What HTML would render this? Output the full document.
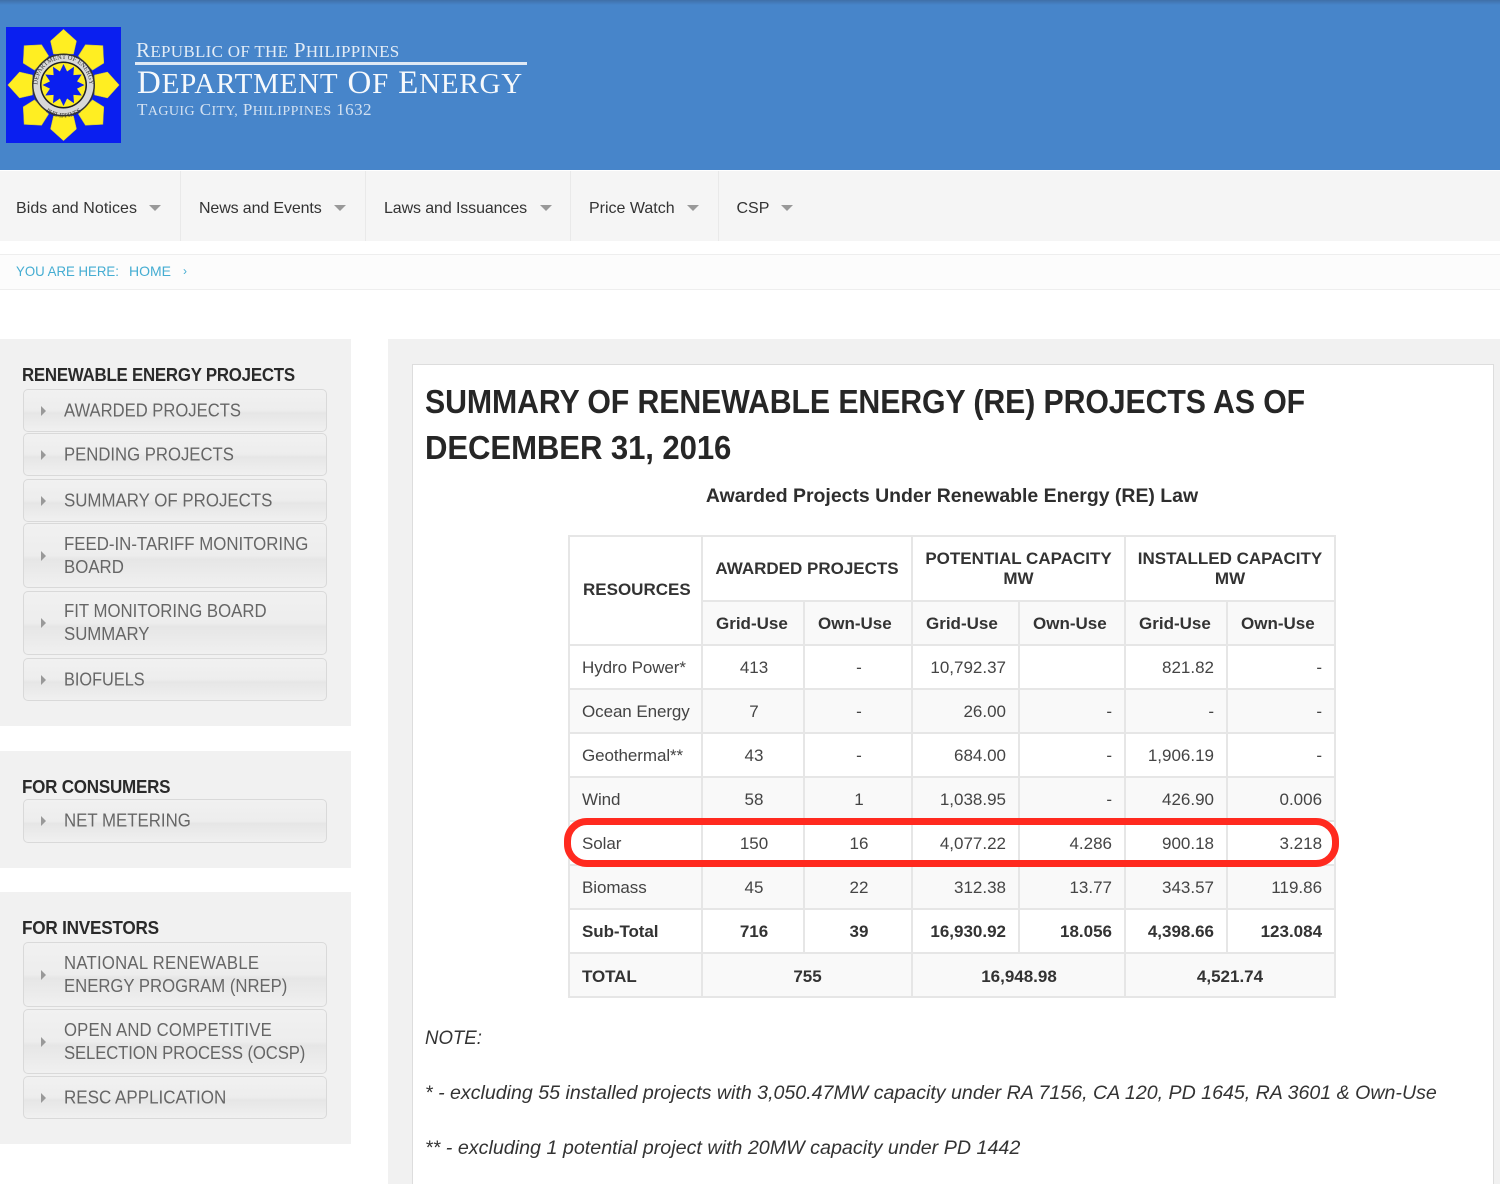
<!DOCTYPE html>
<html><head><meta charset="utf-8"><title>Department of Energy</title>
<style>
html,body{margin:0;padding:0;background:#fff;overflow:hidden}
#w{width:1500px;height:1184px;position:relative;overflow:hidden;font-family:"Liberation Sans",Arial,sans-serif}
.a{position:absolute;white-space:nowrap}
.hdr{left:0;top:0;width:1500px;height:170px;background:#4785ca}
.hdr i{position:absolute;left:0;top:0;width:1500px;height:5px;background:linear-gradient(#3f6fa8,#4785ca)}
.nav{left:0;top:171px;width:1500px;height:70px;background:#f5f5f5}
.sep{top:171px;width:1px;height:70px;background:#e9e9e9}
.nt{top:200px;font-size:16px;line-height:18px;color:#333}
.car{top:205px;width:0;height:0;border-left:6px solid transparent;border-right:6px solid transparent;border-top:6px solid #999}
.bc{left:-1px;top:254px;width:1503px;height:34px;background:#fcfcfc;border:1px solid #eee}
.bt{top:263px;font-size:14px;line-height:17px;color:#45add2}
.p{background:#f1f1f1}
.h{left:22px;font-size:18px;line-height:20px;font-weight:bold;color:#2a2a2a;letter-spacing:-.25px;transform-origin:0 0}
.m{left:23px;width:302px;box-sizing:content-box;border:1.5px solid #d9d9d9;border-radius:5px;background:linear-gradient(#f1f1f1 0,#ededed 50%,#e6e6e6 56%,#f0f0f0 100%)}
.m span{position:absolute;left:39.5px;top:50%;transform:translateY(-50%) scaleX(var(--x,.928));transform-origin:0 50%;font-size:18px;line-height:23px;color:#666;white-space:nowrap}
.m b{position:absolute;left:17px;top:50%;margin-top:-5px;width:0;height:0;border-top:5px solid transparent;border-bottom:5px solid transparent;border-left:5px solid #999}
.title{left:425px;font-size:33px;line-height:46px;font-weight:bold;color:#262626;letter-spacing:-.1px;transform-origin:0 0}
.sv{font-family:"Liberation Serif",serif}
.sv span{font-size:var(--s)}
table{position:absolute;left:568px;top:535px;border-collapse:collapse;table-layout:fixed;width:766px;font-size:17px;color:#444;background:#fff}
td,th{border:2px solid #e6e6e6;padding:2px 12px 0 14px;height:40px;box-sizing:border-box;text-align:center;line-height:20px;font-weight:normal;white-space:nowrap}
th{color:#333;font-weight:bold}
th.t{padding:0}
th.u{text-align:left;padding:2px 0 0 13px}
td.l{text-align:left;padding-left:12px;letter-spacing:-.08px}td.r{text-align:right}
tr.s td,tr.s th{background:#f9f9f9}
tr.b td{font-weight:bold;color:#333}
.note{left:425px;font-size:19.6px;line-height:24px;font-style:italic;color:#333;transform-origin:0 0}
.oval{left:564px;top:818px;width:775px;height:49px;box-sizing:border-box;border:7px solid #ff2a1f;border-radius:23px}
</style></head><body><div id="w">
<div class="a hdr"><i></i></div>
<svg class="a" style="left:0;top:0" width="135" height="160" viewBox="0 0 135 160">
<rect x="6" y="27" width="115" height="116" fill="#0a1ff0"/>
<g fill="#ffee22" stroke="#c8c040" stroke-width=".5">
<polygon points="63.5,29.3 76.5,41 73.5,54 53.5,54 50.5,41"/>
<polygon points="63.5,29.3 76.5,41 73.5,54 53.5,54 50.5,41" transform="rotate(45 63.5 85)"/>
<polygon points="63.5,29.3 76.5,41 73.5,54 53.5,54 50.5,41" transform="rotate(90 63.5 85)"/>
<polygon points="63.5,29.3 76.5,41 73.5,54 53.5,54 50.5,41" transform="rotate(135 63.5 85)"/>
<polygon points="63.5,29.3 76.5,41 73.5,54 53.5,54 50.5,41" transform="rotate(180 63.5 85)"/>
<polygon points="63.5,29.3 76.5,41 73.5,54 53.5,54 50.5,41" transform="rotate(225 63.5 85)"/>
<polygon points="63.5,29.3 76.5,41 73.5,54 53.5,54 50.5,41" transform="rotate(270 63.5 85)"/>
<polygon points="63.5,29.3 76.5,41 73.5,54 53.5,54 50.5,41" transform="rotate(315 63.5 85)"/>
</g>
<circle cx="63.5" cy="85" r="31.5" fill="#333"/>
<circle cx="63.5" cy="85" r="30" fill="#d8d8d8"/>
<circle cx="63.5" cy="85" r="23.5" fill="#222"/>
<circle cx="63.5" cy="85" r="22" fill="#ffee22"/>
<polygon fill="#0a1ff0" points="63.5,64 67.1,71.5 74,66.8 73.4,75.1 81.7,74.5 77,81.4 84.5,85 77,88.6 81.7,95.5 73.4,94.9 74,103.2 67.1,98.5 63.5,106 59.9,98.5 53,103.2 53.6,94.9 45.3,95.5 50,88.6 42.5,85 50,81.4 45.3,74.5 53.6,75.1 53,66.8 59.9,71.5"/>
<path id="rg" d="M37.5,85 A26,26 0 1 1 89.5,85" fill="none"/>
<path id="rg2" d="M34,88 A29.5,29.5 0 0 0 93,88" fill="none"/>
<text font-family="Liberation Serif,serif" font-size="6.5" fill="#333"><textPath href="#rg" startOffset="50%" text-anchor="middle">DEPARTMENT OF ENERGY</textPath></text>
<text font-family="Liberation Serif,serif" font-size="6.5" fill="#333"><textPath href="#rg2" startOffset="50%" text-anchor="middle">PHILIPPINES</textPath></text>
</svg>
<div class="a sv" style="left:136px;top:39px;font-size:21px;line-height:22px;color:#e3ecf6;letter-spacing:.3px;--s:17px">R<span>EPUBLIC OF THE</span> P<span>HILIPPINES</span></div>
<div class="a" style="left:135px;top:62px;width:392px;height:3px;background:#dfe9f5"></div>
<div class="a sv" style="left:137px;top:65px;font-size:33px;line-height:37px;color:#f6f9fc;letter-spacing:.8px;--s:29px">D<span>EPARTMENT</span> O<span>F</span> E<span>NERGY</span></div>
<div class="a sv" style="left:137px;top:100px;font-size:17px;line-height:20px;color:#d3e1f1;letter-spacing:.42px;--s:14px">T<span>AGUIG</span> C<span>ITY,</span> P<span>HILIPPINES</span> 1632</div>

<div class="a nav"></div>
<div class="a sep" style="left:180px"></div><div class="a sep" style="left:365px"></div><div class="a sep" style="left:570px"></div><div class="a sep" style="left:718px"></div>
<div class="a nt" style="left:16px;letter-spacing:.06px">Bids and Notices</div><div class="a car" style="left:149px"></div>
<div class="a nt" style="left:199px;letter-spacing:-.13px">News and Events</div><div class="a car" style="left:334px"></div>
<div class="a nt" style="left:384px;letter-spacing:-.11px">Laws and Issuances</div><div class="a car" style="left:540px"></div>
<div class="a nt" style="left:589px">Price Watch</div><div class="a car" style="left:687px"></div>
<div class="a nt" style="left:736.5px">CSP</div><div class="a car" style="left:781px"></div>

<div class="a bc"></div>
<div class="a bt" style="left:16px;transform:scaleX(.945);transform-origin:0 0">YOU ARE HERE:</div>
<div class="a bt" style="left:129px">HOME</div>
<div class="a bt" style="left:183px;font-size:12px">›</div>

<div class="a p" style="left:0;top:339px;width:351px;height:387px"></div>
<div class="a p" style="left:0;top:751px;width:351px;height:117px"></div>
<div class="a p" style="left:0;top:892px;width:351px;height:252px"></div>

<div class="a h" style="top:365px;transform:scaleX(.936)">RENEWABLE ENERGY PROJECTS</div>
<div class="a m" style="top:389px;height:41px"><b></b><span style="--x:.923">AWARDED PROJECTS</span></div>
<div class="a m" style="top:433px;height:41px"><b></b><span>PENDING PROJECTS</span></div>
<div class="a m" style="top:479px;height:41px"><b></b><span style="--x:.937">SUMMARY OF PROJECTS</span></div>
<div class="a m" style="top:523px;height:63px"><b></b><span style="--x:.935">FEED-IN-TARIFF MONITORING<br>BOARD</span></div>
<div class="a m" style="top:591px;height:62px"><b></b><span style="--x:.932">FIT MONITORING BOARD<br>SUMMARY</span></div>
<div class="a m" style="top:658px;height:41px"><b></b><span style="--x:.906">BIOFUELS</span></div>

<div class="a h" style="top:777px;transform:scaleX(.946)">FOR CONSUMERS</div>
<div class="a m" style="top:799px;height:42px"><b></b><span style="--x:.935">NET METERING</span></div>

<div class="a h" style="top:918px;transform:scaleX(.954)">FOR INVESTORS</div>
<div class="a m" style="top:942px;height:63px"><b></b><span><span style="position:static;transform:none;letter-spacing:.28px">NATIONAL RENEWABLE</span><br>ENERGY PROGRAM (NREP)</span></div>
<div class="a m" style="top:1009px;height:63px"><b></b><span><span style="position:static;transform:none;letter-spacing:.2px">OPEN AND COMPETITIVE</span><br><span style="position:static;transform:none;letter-spacing:-.13px">SELECTION PROCESS (OCSP)</span></span></div>
<div class="a m" style="top:1076px;height:41px"><b></b><span style="--x:.945">RESC APPLICATION</span></div>

<div class="a p" style="left:388px;top:339px;width:1112px;height:845px"></div>
<div class="a" style="left:412px;top:364px;width:1080px;height:830px;background:#fff;border:1px solid #ddd"></div>

<div class="a title" style="top:379px;transform:scaleX(.917)">SUMMARY OF RENEWABLE ENERGY (RE) PROJECTS AS OF</div>
<div class="a title" style="top:425px;transform:scaleX(.943)">DECEMBER 31, 2016</div>
<div class="a" style="left:412px;top:484px;width:1080px;text-align:center;font-size:19.45px;line-height:24px;font-weight:bold;color:#2e2e2e">Awarded Projects Under Renewable Energy (RE) Law</div>

<table>
<colgroup><col style="width:133px"><col style="width:102px"><col style="width:108px"><col style="width:107px"><col style="width:106px"><col style="width:102px"><col style="width:108px"></colgroup>
<tr style="height:65px"><th rowspan="2" class="u" style="padding:0 0 2px 13px">RESOURCES</th><th colspan="2" class="t">AWARDED PROJECTS</th><th colspan="2" class="t">POTENTIAL CAPACITY<br>MW</th><th colspan="2" class="t">INSTALLED CAPACITY<br>MW</th></tr>
<tr class="s" style="height:44px"><th class="u">Grid-Use</th><th class="u">Own-Use</th><th class="u">Grid-Use</th><th class="u">Own-Use</th><th class="u">Grid-Use</th><th class="u">Own-Use</th></tr>
<tr style="height:44px"><td class="l">Hydro Power*</td><td>413</td><td>-</td><td class="r">10,792.37</td><td class="r"></td><td class="r">821.82</td><td class="r">-</td></tr>
<tr class="s" style="height:44px"><td class="l">Ocean Energy</td><td>7</td><td>-</td><td class="r">26.00</td><td class="r">-</td><td class="r">-</td><td class="r">-</td></tr>
<tr style="height:44px"><td class="l">Geothermal**</td><td>43</td><td>-</td><td class="r">684.00</td><td class="r">-</td><td class="r">1,906.19</td><td class="r">-</td></tr>
<tr class="s" style="height:44px"><td class="l">Wind</td><td>58</td><td>1</td><td class="r">1,038.95</td><td class="r">-</td><td class="r">426.90</td><td class="r">0.006</td></tr>
<tr style="height:44px"><td class="l">Solar</td><td>150</td><td>16</td><td class="r">4,077.22</td><td class="r">4.286</td><td class="r">900.18</td><td class="r">3.218</td></tr>
<tr class="s" style="height:44px"><td class="l">Biomass</td><td>45</td><td>22</td><td class="r">312.38</td><td class="r">13.77</td><td class="r">343.57</td><td class="r">119.86</td></tr>
<tr class="b" style="height:44px"><td class="l">Sub-Total</td><td>716</td><td>39</td><td class="r">16,930.92</td><td class="r">18.056</td><td class="r">4,398.66</td><td class="r">123.084</td></tr>
<tr class="s b" style="height:44px"><td class="l" style="padding-top:3px">TOTAL</td><td colspan="2" style="padding:3px 0 0 1px">755</td><td colspan="2" style="padding:3px 0 0 1px">16,948.98</td><td colspan="2" style="padding:3px 0 0">4,521.74</td></tr>
</table>
<div class="a oval"></div>

<div class="a note" style="top:1026px;transform:scaleX(.95)">NOTE:</div>
<div class="a note" style="top:1081px">* - excluding 55 installed projects with 3,050.47MW capacity under RA 7156, CA 120, PD 1645, RA 3601 &amp; Own-Use</div>
<div class="a note" style="top:1136px;font-size:19.7px">** - excluding 1 potential project with 20MW capacity under PD 1442</div>
</div></body></html>
